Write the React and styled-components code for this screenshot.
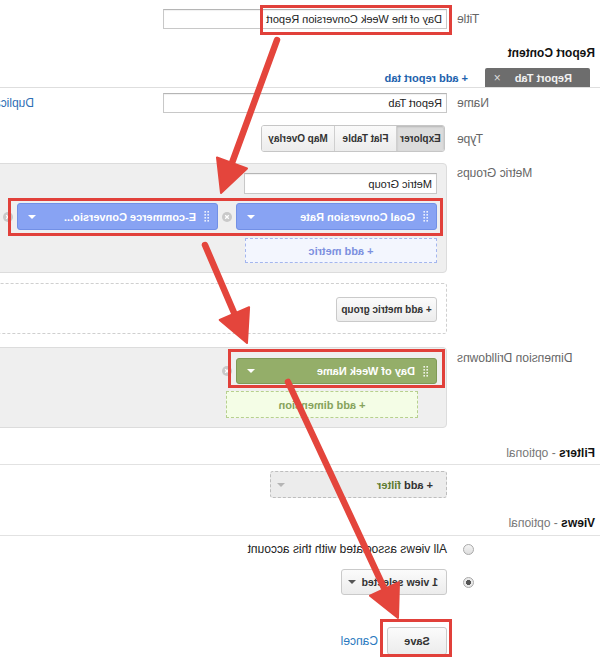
import React from "react";
import styled, { createGlobalStyle } from "styled-components";

const GlobalStyle = createGlobalStyle`
  body {
    margin: 0;
    background: #fff;
    font-family: "Liberation Sans", Arial, sans-serif;
    font-size: 12px;
    color: #222;
  }
`;

// the reference is a mirrored screenshot, so the whole page is flipped
const Page = styled.div`
  position: relative;
  width: 600px;
  height: 664px;
  overflow: hidden;
  background: #fff;
  transform: scaleX(-1);
  display: flex;
  flex-direction: column;
`;

const Row = styled.div`
  display: grid;
  grid-template-columns: 143px 1fr;
  column-gap: 10px;
  align-items: ${({ $top }) => ($top ? "start" : "center")};
  margin-top: ${({ $mt }) => $mt || 0}px;
`;

const Label = styled.div`
  text-align: right;
  color: #666;
  font-size: 12px;
  line-height: 14px;
  padding-top: ${({ $pt }) => $pt || 0}px;
  white-space: nowrap;
`;

const Content = styled.div`
  display: flex;
  align-items: center;
  min-width: 0;
  white-space: nowrap;
`;

const TextInput = styled.div`
  box-sizing: border-box;
  width: ${({ $w }) => $w}px;
  height: ${({ $h }) => $h || 20}px;
  border: 1px solid #c8c8c8;
  border-top-color: #b5b5b5;
  box-shadow: inset 0 1px 1px rgba(0, 0, 0, 0.06);
  background: #fff;
  padding: 0 4px;
  display: flex;
  align-items: center;
  font-size: 11px;
  color: #222;
  flex-shrink: 0;
`;

const Heading = styled.div`
  margin-top: ${({ $mt }) => $mt}px;
  padding: 0 5px ${({ $pb }) => $pb || 0}px;
  line-height: 14px;
  font-size: 12px;
  font-weight: bold;
  color: #111;
  border-bottom: ${({ $line }) => ($line ? "1px solid #e2e2e2" : "none")};
`;

const Optional = styled.span`
  font-weight: normal;
  color: #777;
`;

const TabBar = styled.div`
  margin-top: 8px;
  display: flex;
  align-items: flex-end;
  padding-left: 10px;
  border-bottom: 1px solid #dedede;
  height: 19px;
`;

const Tab = styled.div`
  box-sizing: border-box;
  width: 105px;
  height: 19px;
  background: #6d6d6d;
  border-radius: 2px 2px 0 0;
  color: #f2f2f2;
  font-weight: bold;
  font-size: 11px;
  display: flex;
  align-items: center;
  padding-left: 18px;
  gap: 14px;
`;

const TabClose = styled.span`
  font-weight: normal;
  font-size: 12px;
  color: #ddd;
`;

const BlueLink = styled.span`
  color: ${({ $c }) => $c || "#1d62ad"};
  font-weight: ${({ $bold }) => ($bold ? "bold" : "normal")};
  font-size: ${({ $fs }) => $fs || 12}px;
  margin-left: ${({ $ml }) => $ml || 0}px;
  margin-bottom: ${({ $mb }) => $mb || 0}px;
  white-space: nowrap;
`;

const Segmented = styled.div`
  display: flex;
  margin-left: 2px;
  border: 1px solid #c6c6c6;
  border-radius: 3px;
  overflow: hidden;
  height: 27px;
  box-sizing: border-box;
`;

const SegButton = styled.div`
  width: ${({ $w }) => $w}px;
  display: flex;
  align-items: center;
  justify-content: center;
  font-size: 10px;
  font-weight: bold;
  color: #333;
  background: ${({ $active }) =>
    $active ? "#dcdcdc" : "linear-gradient(#fafafa, #ececec)"};
  box-shadow: ${({ $active }) =>
    $active ? "inset 0 1px 2px rgba(0,0,0,0.18)" : "none"};
  border-left: ${({ $first }) => ($first ? "none" : "1px solid #cfcfcf")};
`;

const Panel = styled.div`
  box-sizing: border-box;
  width: 470px;
  background: #efefef;
  border: 1px solid #dcdcdc;
  border-radius: 4px;
  padding: ${({ $pad }) => $pad};
  display: flex;
  flex-direction: column;
  align-items: flex-start;
`;

const DashedGroup = styled.div`
  box-sizing: border-box;
  width: 470px;
  height: 51px;
  margin-top: 10px;
  margin-left: 153px;
  border: 1px dashed #cfcfcf;
  border-radius: 3px;
  padding: 13px 0 0 9px;
`;

const ChipRow = styled.div`
  display: flex;
  align-items: center;
  margin-top: ${({ $mt }) => $mt || 0}px;
`;

const Chip = styled.div`
  box-sizing: border-box;
  width: 201px;
  height: ${({ $h }) => $h}px;
  border-radius: 3px;
  background: ${({ $kind }) => ($kind === "dim" ? "#94ae69" : "#88a3f3")};
  border: 1px solid ${({ $kind }) => ($kind === "dim" ? "#7f9a56" : "#7290e6")};
  display: flex;
  align-items: center;
  padding: 0 10px 0 8px;
  color: #fff;
  font-weight: bold;
  font-size: 11px;
`;

const ChipText = styled.span`
  flex: 1;
  margin-left: 8px;
  overflow: hidden;
  white-space: nowrap;
`;

const Caret = styled.span`
  width: 0;
  height: 0;
  flex-shrink: 0;
  border-left: 4px solid transparent;
  border-right: 4px solid transparent;
  border-top: 4px solid ${({ $c }) => $c || "#fff"};
  margin-left: ${({ $ml }) => $ml || 0}px;
`;

const CloseWrap = styled.span`
  display: flex;
  margin: 0 4px 0 4px;
`;

const AddBox = styled.div`
  box-sizing: border-box;
  width: ${({ $w }) => $w}px;
  height: ${({ $h }) => $h}px;
  margin-top: ${({ $mt }) => $mt || 0}px;
  margin-left: ${({ $ml }) => $ml || 0}px;
  border: 1px dashed ${({ $kind }) => ($kind === "dim" ? "#b7d08f" : "#a4b6ee")};
  background: ${({ $kind }) => ($kind === "dim" ? "#f4fde6" : "#f3f6fe")};
  color: ${({ $kind }) => ($kind === "dim" ? "#86a35c" : "#7c90df")};
  font-weight: bold;
  font-size: 11px;
  display: flex;
  align-items: center;
  justify-content: center;
`;

const Button = styled.div`
  box-sizing: border-box;
  width: ${({ $w }) => $w}px;
  height: ${({ $h }) => $h}px;
  border: 1px solid #cacaca;
  border-radius: 3px;
  background: linear-gradient(#fbfbfb, #ececec);
  font-weight: bold;
  font-size: ${({ $fs }) => $fs || 11}px;
  color: #333;
  white-space: nowrap;
  display: flex;
  align-items: center;
  justify-content: ${({ $left }) => ($left ? "flex-start" : "center")};
  gap: 6px;
  padding: ${({ $left }) => ($left ? "0 0 0 8px" : "0")};
`;

const FilterBox = styled.div`
  box-sizing: border-box;
  width: 177px;
  height: 27px;
  border: 1px dashed #bdbdbd;
  border-radius: 3px;
  background: #ececec;
  font-size: 11px;
  font-weight: bold;
  color: #333;
  display: flex;
  align-items: center;
  justify-content: space-between;
  padding: 0 6px 0 13px;
`;

const FilterWord = styled.span`
  color: #5f7d33;
`;

const Radio = styled.span`
  display: inline-block;
  box-sizing: border-box;
  width: 11px;
  height: 11px;
  border-radius: 50%;
  border: 1px solid #a9a9a9;
  background: ${({ $on }) =>
    $on
      ? "radial-gradient(circle, #555 0 2.3px, #e9e9e9 2.8px)"
      : "linear-gradient(#f4f4f4, #dedede)"};
  margin-right: 6px;
  vertical-align: middle;
`;

const RadioCell = styled.div`
  text-align: right;
  line-height: 11px;
  height: 11px;
`;

const PlainText = styled.span`
  font-size: 12px;
  color: #222;
`;

const Overlay = styled.svg`
  position: absolute;
  left: 0;
  top: 0;
  pointer-events: none;
`;

function Grip() {
  const dots = [];
  for (let r = 0; r < 4; r++)
    for (let c = 0; c < 2; c++)
      dots.push(<rect key={r + "-" + c} x={c * 3} y={r * 3} width="1.6" height="1.6" fill="rgba(255,255,255,0.85)" />);
  return (
    <svg width="5" height="11" viewBox="0 0 5 11">
      {dots}
    </svg>
  );
}

function CloseIcon() {
  return (
    <CloseWrap>
      <svg width="10" height="10" viewBox="0 0 10 10">
        <circle cx="5" cy="5" r="5" fill="#c9c9c9" />
        <path d="M3.2 3.2 L6.8 6.8 M6.8 3.2 L3.2 6.8" stroke="#fff" strokeWidth="1.3" />
      </svg>
    </CloseWrap>
  );
}

function Arrow({ x1, y1, x2, y2 }) {
  const dx = x2 - x1;
  const dy = y2 - y1;
  const len = Math.hypot(dx, dy);
  const ux = dx / len;
  const uy = dy / len;
  const L = 32;
  const W = 16;
  const bx = x2 - ux * L;
  const by = y2 - uy * L;
  const nx = -uy;
  const ny = ux;
  const pts = [
    [x2, y2],
    [bx + nx * W, by + ny * W],
    [bx - nx * W, by - ny * W],
  ]
    .map((p) => p.join(","))
    .join(" ");
  return (
    <g>
      <line x1={x1} y1={y1} x2={bx + ux * 4} y2={by + uy * 4} stroke="#e4453c" strokeWidth="6.5" strokeLinecap="round" />
      <polygon points={pts} fill="#e4453c" stroke="#e4453c" strokeWidth="2" strokeLinejoin="round" />
    </g>
  );
}

const arrows = [
  { x1: 323, y1: 40, x2: 379, y2: 193 },
  { x1: 395, y1: 245, x2: 353, y2: 343 },
  { x1: 312, y1: 382, x2: 202, y2: 618 },
];

const boxes = [
  { x: 148, y: 5, w: 192, h: 30 },
  { x: 157, y: 198, w: 435, h: 38 },
  { x: 155, y: 349, w: 217, h: 39 },
  { x: 148, y: 619, w: 72, h: 38 },
];

export default function App() {
  return (
    <>
      <GlobalStyle />
      <Page>
        <Row $mt={9}>
          <Label>Title</Label>
          <Content>
            <TextInput $w={284}>Day of the Week Conversion Report</TextInput>
          </Content>
        </Row>

        <Heading $mt={17}>Report Content</Heading>

        <TabBar>
          <Tab>
            Report Tab <TabClose>×</TabClose>
          </Tab>
          <BlueLink $bold $fs={11} $ml={17} $mb={3}>
            + add report tab
          </BlueLink>
        </TabBar>

        <Row $mt={5}>
          <Label>Name</Label>
          <Content>
            <TextInput $w={284}>Report Tab</TextInput>
            <BlueLink $c="#2f6fb5" $ml={129}>Duplicate</BlueLink>
          </Content>
        </Row>

        <Row $mt={12}>
          <Label>Type</Label>
          <Content>
            <Segmented>
              <SegButton $w={47} $first $active>Explorer</SegButton>
              <SegButton $w={61}>Flat Table</SegButton>
              <SegButton $w={72}>Map Overlay</SegButton>
            </Segmented>
          </Content>
        </Row>

        <Row $mt={11} $top>
          <Label $pt={3}>Metric Groups</Label>
          <Panel $pad="9px 0 9px 9px">
            <TextInput $w={193} $h={21}>Metric Group</TextInput>
            <ChipRow $mt={9}>
              <Chip $h={27}>
                <Grip />
                <ChipText>Goal Conversion Rate</ChipText>
                <Caret />
              </Chip>
              <CloseIcon />
              <Chip $h={27}>
                <Grip />
                <ChipText>E-commerce Conversio...</ChipText>
                <Caret />
              </Chip>
              <CloseIcon />
            </ChipRow>
            <AddBox $w={192} $h={25} $mt={8}>+ add metric</AddBox>
          </Panel>
        </Row>

        <DashedGroup>
          <Button $w={101} $h={25} $fs={10}>+ add metric group</Button>
        </DashedGroup>

        <Row $mt={13} $top>
          <Label $pt={4}>Dimension Drilldowns</Label>
          <Panel $pad="10px 0 9px 9px">
            <ChipRow>
              <Chip $h={26} $kind="dim">
                <Grip />
                <ChipText>Day of Week Name</ChipText>
                <Caret />
              </Chip>
              <CloseIcon />
            </ChipRow>
            <AddBox $w={192} $h={27} $mt={7} $ml={19} $kind="dim">
              + add dimension
            </AddBox>
          </Panel>
        </Row>

        <Heading $mt={18} $pb={4} $line>
          Filters <Optional>- optional</Optional>
        </Heading>

        <Row $mt={6}>
          <span />
          <Content>
            <FilterBox>
              <span>
                + add <FilterWord>filter</FilterWord>
              </span>
              <Caret $c="#b5b5b5" />
            </FilterBox>
          </Content>
        </Row>

        <Heading $mt={18} $pb={5} $line>
          Views <Optional>- optional</Optional>
        </Heading>

        <Row $mt={6}>
          <RadioCell>
            <Radio />
          </RadioCell>
          <Content>
            <PlainText>All views associated with this account</PlainText>
          </Content>
        </Row>

        <Row $mt={13}>
          <RadioCell>
            <Radio $on />
          </RadioCell>
          <Content>
            <Button $w={106} $h={26} $fs={10.5} $left>
              1 view selected
              <Caret $c="#555" />
            </Button>
          </Content>
        </Row>

        <Row $mt={32}>
          <span />
          <Content>
            <Button $w={60} $h={28}>Save</Button>
            <BlueLink $c="#2a7ac0" $ml={9}>Cancel</BlueLink>
          </Content>
        </Row>

        <Overlay width="600" height="664" viewBox="0 0 600 664">
          {boxes.map((b, i) => (
            <rect key={i} x={b.x + 1.5} y={b.y + 1.5} width={b.w - 3} height={b.h - 3} fill="none" stroke="#e1403a" strokeWidth="3" />
          ))}
          {arrows.map((a, i) => (
            <Arrow key={i} {...a} />
          ))}
        </Overlay>
      </Page>
    </>
  );
}
